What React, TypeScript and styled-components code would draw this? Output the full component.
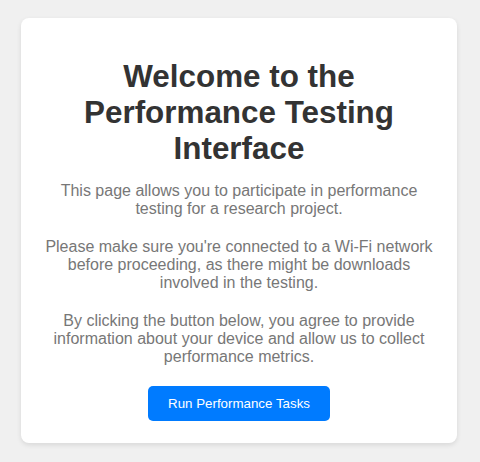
import React from "react";
import styled, { createGlobalStyle } from "styled-components";

const GlobalStyle = createGlobalStyle`
  html, body {
    margin: 0;
    padding: 0;
    background: #f0f0f0;
    font-family: "Liberation Sans", Arial, sans-serif;
  }
`;

const Page = styled.div`
  padding: 18px 23px 20px 21px;
`;

const Card = styled.div`
  background: #ffffff;
  border-radius: 8px;
  box-shadow: 0 2px 5px rgba(0, 0, 0, 0.1);
  padding: 20px 20px 22px;
  text-align: center;
`;

const Title = styled.h1`
  font-size: 31.4px;
  font-weight: bold;
  color: #333333;
  margin: 21px 0 15px;
`;

const Text = styled.p`
  font-size: 16px;
  color: #777777;
  margin: 0 0 20px;
`;

const Button = styled.button`
  font-family: "Liberation Sans", Arial, sans-serif;
  font-size: 13.333px;
  background: #007bff;
  color: #ffffff;
  border: none;
  border-radius: 5px;
  padding: 10px 20px;
  margin: 0;
  cursor: pointer;
`;

export default function App() {
  return (
    <>
      <GlobalStyle />
      <Page>
        <Card>
          <Title>Welcome to the Performance Testing Interface</Title>
          <Text>
            This page allows you to participate in performance testing for a
            research project.
          </Text>
          <Text>
            Please make sure you're connected to a Wi-Fi network before
            proceeding, as there might be downloads involved in the testing.
          </Text>
          <Text>
            By clicking the button below, you agree to provide information
            about your device and allow us to collect performance metrics.
          </Text>
          <Button>Run Performance Tasks</Button>
        </Card>
      </Page>
    </>
  );
}
